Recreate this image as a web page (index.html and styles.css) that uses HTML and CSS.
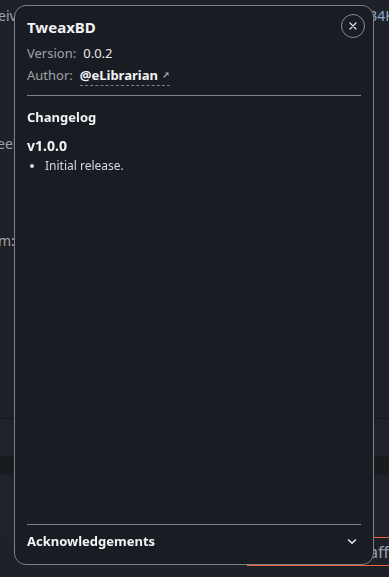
FILE: index.html
```html
<!DOCTYPE html>
<html>
<head>
<meta charset="utf-8">
<link rel="stylesheet" href="styles.css">
</head>
<body>
<div class="backdrop">
  <div class="bg-row bg-row-1"><span class="frag">eiv</span><span class="frag frag-blue">34K</span></div>
  <div class="bg-row bg-row-2"><span class="frag">eek</span></div>
  <div class="bg-row bg-row-3"><span class="frag">m:</span></div>
  <div class="bg-row bg-row-4"></div>
  <div class="bg-row bg-row-5"></div>
  <div class="bg-row bg-row-6"></div>
  <div class="bg-row bg-row-7"><span class="frag frag-aff">aff</span></div>
  <div class="bg-row bg-row-8"><span class="tab-bar"></span><span class="tab-line"></span></div>
</div>

<div class="modal">
  <button class="close" aria-label="Close">
    <svg width="8" height="8" viewBox="0 0 8 8"><path d="M1 1L7 7M7 1L1 7" stroke="#e8e9ec" stroke-width="1.2" stroke-linecap="round"/></svg>
  </button>
  <div class="head">
    <h1 class="title">TweaxBD</h1>
    <div class="meta"><span class="label">Version:</span><span class="value">0.0.2</span></div>
    <div class="meta"><span class="label">Author:</span><a class="author">@eLibrarian<svg class="ext" width="8" height="8" viewBox="0 0 8 8"><path d="M1.5 6.5L6 2" stroke="#9ea3ab" stroke-width="1.3"/><path d="M3 1.5H6.5V5Z" fill="#9ea3ab"/></svg></a></div>
  </div>
  <div class="body">
    <h2 class="section">Changelog</h2>
    <h3 class="version">v1.0.0</h3>
    <ul class="changes"><li>Initial release.</li></ul>
  </div>
  <div class="foot">
    <span class="section">Acknowledgements</span>
    <svg width="10" height="7" viewBox="0 0 10 7"><path d="M1.2 1.5L5 5.2L8.8 1.5" fill="none" stroke="#e8e9ec" stroke-width="1.6"/></svg>
  </div>
</div>
</body>
</html>
```
FILE: styles.css
```css
* { box-sizing: border-box; }
html, body { margin: 0; padding: 0; }
body {
  width: 389px;
  height: 577px;
  overflow: hidden;
  background: #1f2128;
  font-family: "Noto Sans", "Liberation Sans", sans-serif;
  color: #e8e9ec;
}
.backdrop {
  display: flex;
  flex-direction: column;
  height: 577px;
  overflow: hidden;
}
.bg-row { display: flex; justify-content: space-between; align-items: flex-start; }
.frag { font-size: 14px; color: #9ea3ab; line-height: 18px; white-space: nowrap; }
.frag-blue { color: #8fa8d0; margin-right: -5px; }
.bg-row-1 { height: 130px; padding-top: 7px; padding-left: 0; }
.bg-row-1 .frag:first-child { margin-left: -2px; }
.bg-row-2 { height: 98px; padding-top: 5px; }
.bg-row-2 .frag { margin-left: -3px; }
.bg-row-3 { height: 190px; padding-top: 4px; }
.bg-row-3 .frag { margin-left: -2px; }
.bg-row-4 { height: 38px; border-top: 1px solid #17181d; background: #202229; }
.bg-row-5 { height: 19px; background: #1a1b1f; }
.bg-row-6 { height: 62px; background: #202229; }
.bg-row-7 { height: 26px; justify-content: flex-end; border-top: 1px solid #e8623a; margin-left: 370px; }
.frag-aff { font-size: 16px; color: #9ea3ab; line-height: 20px; margin-top: 4px; }
.bg-row-8 { height: 13px; align-items: flex-start; }
.tab-bar { width: 96px; height: 3px; background: #e8623a; margin-left: 247px; }
.tab-line { flex: 1; height: 1px; background: #e8623a; margin-top: 2px; }

.modal {
  position: fixed;
  left: 14px;
  top: 5px;
  width: 360px;
  height: 560px;
  background: #1a1c23;
  border: 1px solid #7d8089;
  border-radius: 12px;
  display: flex;
  flex-direction: column;
  padding: 0 12px;
}
.close {
  position: absolute;
  right: 8px;
  top: 8px;
  width: 24px;
  height: 24px;
  border-radius: 50%;
  border: 1px solid #8a8d94;
  background: transparent;
  padding: 0;
  display: flex;
  align-items: center;
  justify-content: center;
}
.head {
  padding-top: 11px;
  padding-bottom: 9px;
  border-bottom: 1px solid #7d8089;
}
.title {
  margin: 0 0 5px;
  font-size: 15px;
  font-weight: 700;
  line-height: 20px;
  color: #f2f3f5;
}
.meta {
  display: flex;
  gap: 7px;
  font-size: 13px;
  line-height: 22px;
}
.label { color: #9ea3ab; }
.value { color: #e8e9ec; }
.author {
  font-weight: 700;
  color: #f2f3f5;
  border-bottom: 1px dashed #7d8089;
  line-height: 18px;
  display: inline-flex;
  align-items: center;
  gap: 4px;
}
.body { flex: 1; padding-top: 12px; }
.section {
  margin: 0;
  font-size: 13px;
  font-weight: 700;
  line-height: 18px;
  color: #f2f3f5;
}
.version {
  margin: 11px 0 0;
  font-size: 14px;
  font-weight: 700;
  line-height: 18px;
  color: #f2f3f5;
}
.changes {
  margin: 2px 0 0;
  padding-left: 18px;
  font-size: 12px;
  line-height: 18px;
  color: #d6d8dc;
}
.foot {
  border-top: 1px solid #7d8089;
  height: 40px;
  display: flex;
  align-items: center;
  justify-content: space-between;
  padding-right: 4px;
  padding-bottom: 7px;
}
```
